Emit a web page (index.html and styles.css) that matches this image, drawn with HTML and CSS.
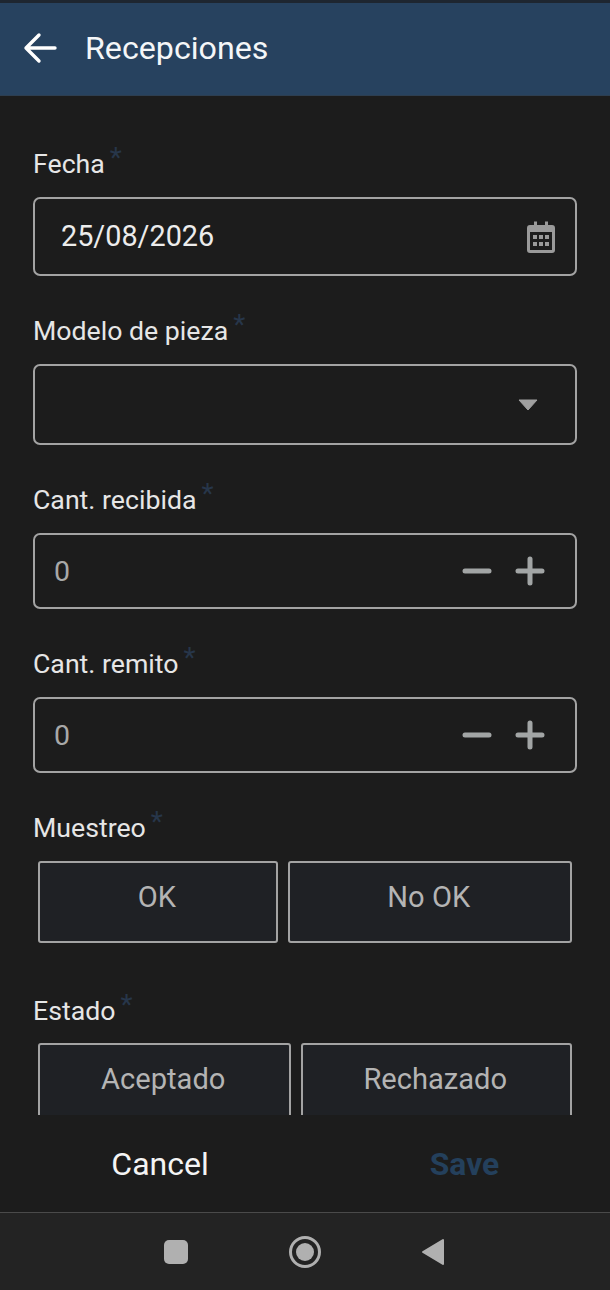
FILE: index.html
```html
<!DOCTYPE html>
<html>
<head>
  <title>Recepciones</title>
  <meta charset="UTF-8">
  <meta name="viewport" content="width=device-width, initial-scale=1.0">
  <link rel="stylesheet" href="styles.css">
</head>
<body>
  <div class="app">
    <header class="topbar">
      <svg class="back-icon" viewBox="0 0 34 32" width="34" height="32">
        <path d="M32 16H3M16 3L3 16l13 13" fill="none" stroke="#fff" stroke-width="3.4" stroke-linecap="round" stroke-linejoin="round"/>
      </svg>
      <span class="topbar-title">Recepciones</span>
    </header>

    <main class="form">
      <div class="field field-date">
        <label class="field-label">Fecha<span class="req">*</span></label>
        <div class="input input-date">
          <span class="date-value">25/08/2026</span>
          <svg class="calendar-icon" viewBox="0 0 30 34" width="30" height="34">
            <path d="M8 1.5h3V5h8V1.5h3V5h4a3 3 0 0 1 3 3v22a3 3 0 0 1-3 3H4a3 3 0 0 1-3-3V8a3 3 0 0 1 3-3h4z" fill="#9a9a9a"/>
            <rect x="4" y="12" width="22" height="18" fill="#1c1c1c"/>
            <g fill="#9a9a9a">
              <rect x="7" y="15" width="4" height="4"/><rect x="13" y="15" width="4" height="4"/><rect x="19" y="15" width="4" height="4"/>
              <rect x="7" y="22" width="4" height="4"/><rect x="13" y="22" width="4" height="4"/><rect x="19" y="22" width="4" height="4"/>
            </g>
          </svg>
        </div>
      </div>

      <div class="field field-select">
        <label class="field-label">Modelo de pieza<span class="req">*</span></label>
        <div class="input input-select">
          <svg viewBox="0 0 20 12" width="20" height="12"><path d="M1 1h18l-9 10z" fill="#a0a0a0" stroke="#a0a0a0" stroke-linejoin="round"/></svg>
        </div>
      </div>

      <div class="field field-num">
        <label class="field-label">Cant. recibida<span class="req">*</span></label>
        <div class="input input-num">
          <span class="num-value">0</span>
          <div class="stepper">
            <svg viewBox="0 0 30 30" width="30" height="30"><path d="M3 15h24" stroke="#a2a5a5" stroke-width="5" stroke-linecap="round"/></svg>
            <svg viewBox="0 0 30 30" width="30" height="30"><path d="M3 15h24M15 3v24" stroke="#a2a5a5" stroke-width="5" stroke-linecap="round"/></svg>
          </div>
        </div>
      </div>

      <div class="field field-num">
        <label class="field-label">Cant. remito<span class="req">*</span></label>
        <div class="input input-num">
          <span class="num-value">0</span>
          <div class="stepper">
            <svg viewBox="0 0 30 30" width="30" height="30"><path d="M3 15h24" stroke="#a2a5a5" stroke-width="5" stroke-linecap="round"/></svg>
            <svg viewBox="0 0 30 30" width="30" height="30"><path d="M3 15h24M15 3v24" stroke="#a2a5a5" stroke-width="5" stroke-linecap="round"/></svg>
          </div>
        </div>
      </div>

      <div class="field field-muestreo">
        <label class="field-label">Muestreo<span class="req">*</span></label>
        <div class="choices choices-muestreo">
          <button class="choice">OK</button>
          <button class="choice">No OK</button>
        </div>
      </div>

      <div class="field field-estado">
        <label class="field-label">Estado<span class="req">*</span></label>
        <div class="choices choices-estado">
          <button class="choice">Aceptado</button>
          <button class="choice">Rechazado</button>
        </div>
      </div>
    </main>

    <div class="actions">
      <button class="action action-cancel">Cancel</button>
      <button class="action action-save">Save</button>
    </div>

    <nav class="navbar">
      <span class="nav-square"></span>
      <span class="nav-circle"><span class="nav-dot"></span></span>
      <svg viewBox="0 0 24 28" width="24" height="28"><path d="M22 2v24L2 14z" fill="#b0b0b0" stroke="#b0b0b0" stroke-width="2" stroke-linejoin="round"/></svg>
    </nav>
  </div>
</body>
</html>
```

FILE: styles.css
```css
* {
  box-sizing: border-box;
}
body {
  margin: 0;
  background-color: #1c1c1c;
  font-family: Roboto, "Liberation Sans", sans-serif;
  color: #e8e8e8;
}
.app {
  display: flex;
  flex-direction: column;
  height: 1290px;
  overflow: hidden;
}
.topbar {
  flex: none;
  display: flex;
  align-items: center;
  gap: 28px;
  height: 96px;
  padding: 0 0 2px 23px;
  background-color: #27425f;
  border-top: 3px solid #1e2630;
  border-bottom: 1px solid #2d3e50;
}
.back-icon {
  flex: none;
}
.topbar-title {
  font-size: 32.2px;
  color: #f4f6f8;
}
.form {
  flex: none;
  height: 1019px;
  overflow: hidden;
  padding: 0 33px;
}
.field-label {
  display: block;
  height: 32px;
  margin-bottom: 17px;
  font-size: 26.7px;
  line-height: 32px;
  color: #e6e6e6;
}
.req {
  display: inline-block;
  margin-left: 5px;
  color: #27364a;
  font-size: 28px;
  line-height: 20px;
  vertical-align: 6px;
}
.field {
  margin-bottom: 39px;
}
.field-date {
  padding-top: 52px;
}
.field-muestreo {
  margin-bottom: 52px;
}
.field-estado .field-label {
  margin-bottom: 16px;
}
.input {
  display: flex;
  align-items: center;
  border: 2px solid #a3a3a3;
  border-radius: 7px;
}
.input-date {
  justify-content: space-between;
  height: 79px;
  padding: 0 19px 2px 26px;
}
.date-value {
  font-size: 28.8px;
  color: #ececec;
}
.calendar-icon {
  margin-top: 2px;
}
.input-select {
  justify-content: flex-end;
  height: 81px;
  padding-right: 37px;
}
.input-num {
  justify-content: space-between;
  height: 76px;
  padding: 0 30px 0 19px;
}
.num-value {
  font-size: 28.5px;
  color: #a8a8a8;
}
.stepper {
  display: flex;
  gap: 23px;
}
.choices {
  display: flex;
  gap: 10px;
  padding: 0 5px;
}
.choice {
  height: 82px;
  padding: 0 2px 11px 0;
  background-color: #1f2125;
  border: 2px solid #a3a3a3;
  border-radius: 3px;
  font-family: inherit;
  font-size: 29.1px;
  color: #b4b4b4;
}
.choices-muestreo .choice:first-child {
  width: 240px;
}
.choices-muestreo .choice:last-child {
  width: 285px;
}
.choices-estado .choice:first-child {
  width: 253px;
}
.choices-estado .choice:last-child {
  width: 272px;
}
.actions {
  flex: none;
  display: flex;
  height: 97px;
}
.action {
  width: 50%;
  padding: 0;
  background: none;
  border: none;
  font-family: inherit;
  font-size: 32px;
}
.action-cancel {
  padding-left: 15px;
  text-align: center;
  color: #f4f4f4;
}
.action-save {
  padding-left: 14px;
  font-weight: 700;
  font-size: 31.8px;
  color: #24405c;
}
.navbar {
  flex: none;
  display: flex;
  align-items: center;
  justify-content: center;
  gap: 100px;
  height: 78px;
  padding: 0 1px 0 0;
  background-color: #232323;
  border-top: 1px solid #4a4a4a;
}
.nav-square {
  width: 24px;
  height: 24px;
  margin-right: 1px;
  border-radius: 5px;
  background-color: #b0b0b0;
}
.nav-circle {
  display: flex;
  align-items: center;
  justify-content: center;
  width: 32px;
  height: 32px;
  border: 3px solid #b0b0b0;
  border-radius: 50%;
}
.nav-dot {
  width: 18px;
  height: 18px;
  border-radius: 50%;
  background-color: #b0b0b0;
}
```
